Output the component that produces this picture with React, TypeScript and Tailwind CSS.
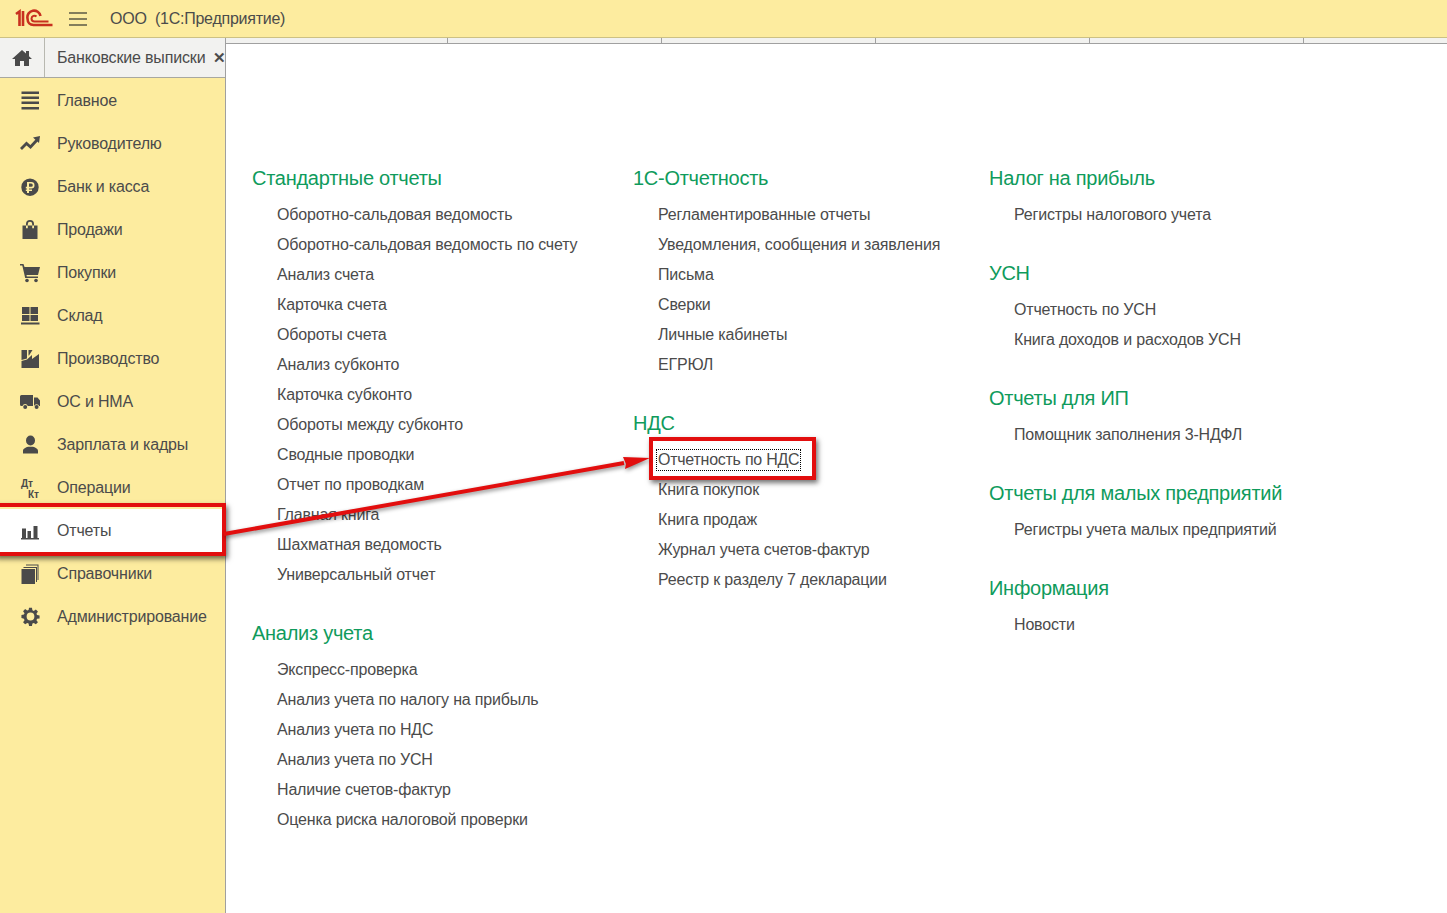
import React from 'react';

const FONT = 'font-["Liberation_Sans",Arial,sans-serif]';

const I = ({ children }: { children: React.ReactNode }) => (
  <svg width="22" height="22" viewBox="0 0 22 22" fill="#4a4a4a" aria-hidden="true">
    {children}
  </svg>
);

const icons: Record<string, React.ReactNode> = {
  main: (
    <I>
      <path d="M2.500 1.500H20V4H2.500zM2.500 6.500H20V9H2.500zM2.500 11.500H20V14H2.500zM2.500 17H20v2.500H2.500z" />
    </I>
  ),
  chief: (
    <I>
      <path d="M2 16l5.500-5.500 4 3.500 6.500-7" fill="none" stroke="#4a4a4a" strokeWidth="2.800" />
      <path d="M14 4.500l7-1.500-1 7z" />
    </I>
  ),
  bank: (
    <I>
      <path
        fillRule="evenodd"
        d="M11 2.500a8.700 8.700 0 100 17.400 8.700 8.700 0 000-17.400zM8 6h4.300a3.200 3.200 0 010 6.400H10v1.100h3v1.600h-3V17H8v-1.900H6.800v-1.600H8v-1.100H6.800v-1.600H8zm2 1.600v3.200h2.200a1.600 1.600 0 000-3.200z"
      />
    </I>
  ),
  sales: (
    <I>
      <path
        fillRule="evenodd"
        d="M3.500 6.500H7V5a4 4 0 018 0v1.500h3.500V20h-15zM8.800 6.500h4.400V5a2.200 2.200 0 00-4.400 0zM7 6.500v2.800h1.800V6.500zm6.200 0v2.800H15V6.500z"
      />
    </I>
  ),
  buy: (
    <I>
      <path d="M1 2h3.500l1 3H21l-2 8H7.500l.3 1.500H19V16H6.200L3.300 3.500H1z" />
      <circle cx="8" cy="18.500" r="1.800" />
      <circle cx="17" cy="18.500" r="1.800" />
    </I>
  ),
  stock: (
    <I>
      <path d="M3 2h7.500v7H3zM11.500 2H19v7h-7.500zM3 10h7.500v6H3zM11.500 10H19v6h-7.500zM2 17.500h18.500V19.500H2z" />
    </I>
  ),
  prod: (
    <I>
      <path d="M2.500 2H8v8.500L2.500 12zM9.500 2h4L10 7.500H9.500z" />
      <path d="M2.500 20v-7L8 11.500l5-4.500v4l7-5v14z" />
    </I>
  ),
  truck: (
    <I>
      <path d="M1 5.500A1.500 1.500 0 012.500 4H14v11H8.800a2.800 2.800 0 00-5.300 0H2.500A1.500 1.500 0 011 13.500zM15 6.500h3.500L21 9.500V15h-.8a2.800 2.800 0 00-5.200 0z" />
      <circle cx="6.200" cy="16" r="2" />
      <circle cx="17.600" cy="16" r="2" />
    </I>
  ),
  staff: (
    <I>
      <ellipse cx="11.500" cy="6.500" rx="4.500" ry="5" />
      <path d="M4 19.500v-2.500c0-2.500 3-3.500 5-4.200h5c2 .7 5 1.700 5 4.200v2.500z" />
    </I>
  ),
  ops: (
    <span className="relative block h-[22px] w-[22px] text-[10px] font-bold leading-none tracking-normal text-[#4a4a4a]">
      <span className="absolute left-[2px] top-[2px]">Дт</span>
      <span className="absolute left-[9px] top-[13px]">Кт</span>
    </span>
  ),
  reports: (
    <I>
      <path d="M3 8.500h4V18H3zM8.500 11H12v7H8.500zM14.500 6h4v12h-4zM2 18h18v1.500H2z" />
    </I>
  ),
  refs: (
    <I>
      <path d="M2.500 6H16v15H2.500z" />
      <path d="M4.500 4H18v15h-1V5H4.500zM7 1.500h12.500V17h-1V2.500H7z" />
    </I>
  ),
  admin: (
    <svg width="19" height="19" viewBox="0 0 22 22" fill="#4a4a4a" aria-hidden="true">
      <path
        fillRule="evenodd"
        d="M9.300 1h3.400l.5 2.900 1.600.7 2.400-1.700 2.400 2.400-1.700 2.400.7 1.600 2.900.5v3.400l-2.900.5-.7 1.600 1.700 2.400-2.400 2.400-2.400-1.700-1.600.7-.5 2.900H9.300l-.5-2.900-1.600-.7-2.400 1.700-2.400-2.400 1.700-2.400-.7-1.600L.5 12.700V9.300l2.900-.5.7-1.600-1.700-2.400 2.400-2.400 2.400 1.700 1.600-.7zM11 6.500a4.500 4.500 0 100 9 4.500 4.500 0 000-9z"
      />
    </svg>
  ),
};

const navItems = [
  { key: 'main', label: 'Главное' },
  { key: 'chief', label: 'Руководителю' },
  { key: 'bank', label: 'Банк и касса' },
  { key: 'sales', label: 'Продажи' },
  { key: 'buy', label: 'Покупки' },
  { key: 'stock', label: 'Склад' },
  { key: 'prod', label: 'Производство' },
  { key: 'truck', label: 'ОС и НМА' },
  { key: 'staff', label: 'Зарплата и кадры' },
  { key: 'ops', label: 'Операции' },
  { key: 'reports', label: 'Отчеты', active: true },
  { key: 'refs', label: 'Справочники' },
  { key: 'admin', label: 'Администрирование' },
];

const columns = [
  {
    width: 'w-[381px]',
    groups: [
      {
        title: 'Стандартные отчеты',
        items: [
          'Оборотно-сальдовая ведомость',
          'Оборотно-сальдовая ведомость по счету',
          'Анализ счета',
          'Карточка счета',
          'Обороты счета',
          'Анализ субконто',
          'Карточка субконто',
          'Обороты между субконто',
          'Сводные проводки',
          'Отчет по проводкам',
          'Главная книга',
          'Шахматная ведомость',
          'Универсальный отчет',
        ],
      },
      {
        title: 'Анализ учета',
        items: [
          'Экспресс-проверка',
          'Анализ учета по налогу на прибыль',
          'Анализ учета по НДС',
          'Анализ учета по УСН',
          'Наличие счетов-фактур',
          'Оценка риска налоговой проверки',
        ],
      },
    ],
  },
  {
    width: 'w-[356px]',
    groups: [
      {
        title: '1С-Отчетность',
        items: [
          'Регламентированные отчеты',
          'Уведомления, сообщения и заявления',
          'Письма',
          'Сверки',
          'Личные кабинеты',
          'ЕГРЮЛ',
        ],
      },
      {
        title: 'НДС',
        items: [
          'Отчетность по НДС',
          'Книга покупок',
          'Книга продаж',
          'Журнал учета счетов-фактур',
          'Реестр к разделу 7 декларации',
        ],
      },
    ],
  },
  {
    width: 'w-[400px]',
    groups: [
      { title: 'Налог на прибыль', items: ['Регистры налогового учета'] },
      { title: 'УСН', items: ['Отчетность по УСН', 'Книга доходов и расходов УСН'] },
      { title: 'Отчеты для ИП', items: ['Помощник заполнения 3-НДФЛ'] },
      { title: 'Отчеты для малых предприятий', items: ['Регистры учета малых предприятий'] },
      { title: 'Информация', items: ['Новости'] },
    ],
  },
];

export default function App() {
  return (
    <div className={`relative h-[913px] w-[1447px] overflow-hidden bg-white text-[16px] tracking-[-0.17px] text-[#4b4b4b] ${FONT}`}>
      {/* Top bar */}
      <header className="flex h-[38px] items-center border-b border-[#cdc184] bg-[#fdec9f]">
        <svg width="38" height="19" viewBox="0 0 38 19" className="ml-[15px]" fill="none" stroke="#c8301f" strokeWidth="2.600" aria-label="1С">
          <path d="M1 5l3.500-2.500V17M8 2v15" />
          <path d="M25.500 7A6.500 6.500 0 0012.500 9.500c0 4 2.700 6.500 6 6.500H37.500" />
          <path d="M21.500 7.500A3 3 0 0016.500 9.500c0 1.800 1 3 3 3h14" strokeWidth="2" />
        </svg>
        <svg width="18" height="14" viewBox="0 0 18 14" className="ml-[16px]" stroke="#5c5a45" strokeWidth="1.300" aria-hidden="true">
          <path d="M0 1h18M0 7h18M0 13h18" />
        </svg>
        <span className="ml-[23px] tracking-[-0.25px]">ООО&nbsp; (1С:Предприятие)</span>
      </header>

      <div className="flex h-[875px]">
        {/* Left column: tabs and section panel */}
        <div className="w-[226px] shrink-0 border-r border-[#a0a0a0] bg-[#fdec9f]">
          <div className="flex h-[40px] overflow-hidden border-b border-[#a8a8a0] bg-[#f2f2f0]">
            <div className="flex w-[45px] shrink-0 items-center justify-center border-r border-[#b8b8b0]">
              <svg width="20" height="18" viewBox="0 0 20 18" fill="#4a4a4a" aria-hidden="true">
                <path d="M10 1L0 10h3v7h5v-5h4v5h5v-7h3l-3-2.700V2h-3v2.600z" />
              </svg>
            </div>
            <div className="flex items-center whitespace-nowrap pl-[12px]">
              Банковские выписки
              <span className="ml-[8px] text-[15px] font-bold leading-none">✕</span>
            </div>
          </div>
          <nav className="pt-[1px]">
            {navItems.map((item) => (
              <div
                key={item.key}
                className={`flex h-[43px] items-center whitespace-nowrap ${item.active ? 'bg-white' : ''}`}
              >
                <span className="ml-[19px] flex h-[22px] w-[22px] items-center justify-center">{icons[item.key]}</span>
                <span className="ml-[16px]">{item.label}</span>
              </div>
            ))}
          </nav>
        </div>

        {/* Right part */}
        <div className="min-w-0 flex-1">
          <div className="flex h-[6px] border-b border-[#a0a0a0] bg-[#f2f2f0]">
            <div className="w-[222px] border-r border-[#a0a0a0]" />
            <div className="w-[214px] border-r border-[#a0a0a0]" />
            <div className="w-[214px] border-r border-[#a0a0a0]" />
            <div className="w-[214px] border-r border-[#a0a0a0]" />
            <div className="w-[214px] border-r border-[#a0a0a0]" />
          </div>
          <main className="flex pl-[26px] pt-[113px]">
            {columns.map((col) => (
              <div key={col.groups[0].title} className={`${col.width} shrink-0`}>
                {col.groups.map((group) => (
                  <section key={group.title} className="mb-[23px]">
                    <h2 className="flex h-[42px] items-center text-[20px] font-normal tracking-[-0.27px] text-[#0f9b5c]">{group.title}</h2>
                    <ul>
                      {group.items.map((item) => (
                        <li key={item} className="flex h-[30px] items-center pl-[25px] pt-[2px]">
                          {item === 'Отчетность по НДС' ? (
                            <span className="ml-[-2px] border border-dotted border-black px-[1px] leading-[20px] tracking-[-0.25px]">{item}</span>
                          ) : (
                            item
                          )}
                        </li>
                      ))}
                    </ul>
                  </section>
                ))}
              </div>
            ))}
          </main>
        </div>
      </div>

      {/* Red annotations on top of the screenshot */}
      <div className="absolute left-[-6px] top-[503px] h-[53px] w-[232px] border-[4px] border-[#e20e0e] shadow-[2px_3px_5px_rgba(0,0,0,0.55)]" />
      <div className="absolute left-[649px] top-[437px] h-[43px] w-[167px] border-[4px] border-[#e20e0e] shadow-[2px_3px_5px_rgba(0,0,0,0.55)]" />
      <svg className="pointer-events-none absolute left-[220px] top-[445px] drop-shadow-[1px_2px_2px_rgba(0,0,0,0.45)]" width="440" height="100" viewBox="0 0 440 100" aria-hidden="true">
        <path d="M4 89L404 18" stroke="#e20e0e" strokeWidth="4" fill="none" />
        <path d="M430 13L403 12l3 7-1 5z" fill="#e20e0e" />
      </svg>
    </div>
  );
}
